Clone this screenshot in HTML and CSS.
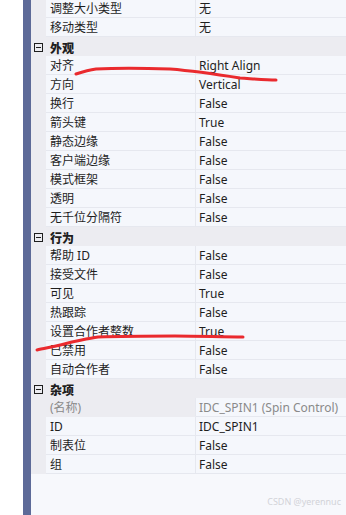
FILE: index.html
```html
<!DOCTYPE html>
<html lang="zh-CN">

<head>
    <meta charset="UTF-8">
    <title>属性</title>
    <link rel="stylesheet" href="styles.css">
</head>

<body>
    <div class="gutter"></div>
    <div class="bar"></div>

    <div class="grid">
        <div class="row first"><span class="strip"></span><span class="name">调整大小类型</span><span class="value">无</span></div>
        <div class="row"><span class="strip"></span><span class="name">移动类型</span><span class="value">无</span></div>

        <div class="cat"><span class="toggle"></span><b>外观</b></div>
        <div class="row"><span class="strip"></span><span class="name">对齐</span><span class="value">Right Align</span></div>
        <div class="row"><span class="strip"></span><span class="name">方向</span><span class="value">Vertical</span></div>
        <div class="row"><span class="strip"></span><span class="name">换行</span><span class="value">False</span></div>
        <div class="row"><span class="strip"></span><span class="name">箭头键</span><span class="value">True</span></div>
        <div class="row"><span class="strip"></span><span class="name">静态边缘</span><span class="value">False</span></div>
        <div class="row"><span class="strip"></span><span class="name">客户端边缘</span><span class="value">False</span></div>
        <div class="row"><span class="strip"></span><span class="name">模式框架</span><span class="value">False</span></div>
        <div class="row"><span class="strip"></span><span class="name">透明</span><span class="value">False</span></div>
        <div class="row"><span class="strip"></span><span class="name">无千位分隔符</span><span class="value">False</span></div>

        <div class="cat"><span class="toggle"></span><b>行为</b></div>
        <div class="row"><span class="strip"></span><span class="name">帮助 ID</span><span class="value">False</span></div>
        <div class="row"><span class="strip"></span><span class="name">接受文件</span><span class="value">False</span></div>
        <div class="row"><span class="strip"></span><span class="name">可见</span><span class="value">True</span></div>
        <div class="row"><span class="strip"></span><span class="name">热跟踪</span><span class="value">False</span></div>
        <div class="row"><span class="strip"></span><span class="name">设置合作者整数</span><span class="value">True</span></div>
        <div class="row"><span class="strip"></span><span class="name">已禁用</span><span class="value">False</span></div>
        <div class="row"><span class="strip"></span><span class="name">自动合作者</span><span class="value">False</span></div>

        <div class="cat"><span class="toggle"></span><b>杂项</b></div>
        <div class="row readonly"><span class="strip"></span><span class="name">(名称)</span><span class="value">IDC_SPIN1 (Spin Control)</span></div>
        <div class="row"><span class="strip"></span><span class="name">ID</span><span class="value">IDC_SPIN1</span></div>
        <div class="row"><span class="strip"></span><span class="name">制表位</span><span class="value">False</span></div>
        <div class="row"><span class="strip"></span><span class="name">组</span><span class="value">False</span></div>
    </div>

    <!-- hand-drawn marks over the grid -->
    <svg class="marks" width="346" height="515" viewBox="0 0 346 515">
        <path d="M76 74 C82 72 88 70 96 69 C115 68 140 68 170 69 C195 71 215 74 240 78 C255 79 266 80 276 80" />
        <path d="M37 350 C45 348 58 346 72 342 C82 340 90 338 98 337 C125 336 150 336 175 336 C200 336 222 337 243 337" />
    </svg>

    <div class="watermark">CSDN @yerennuc</div>
</body>

</html>
```

FILE: styles.css
```css
* {
    margin: 0;
    padding: 0;
    box-sizing: border-box;
}

body {
    font-family: "Noto Sans", "Noto Sans CJK SC", sans-serif;
    font-size: 12px;
    color: #1e1e1e;
    background-color: #fff;
    display: flex;
    height: 515px;
    overflow: hidden;
    position: relative;
}

/* Left edge */
.gutter {
    width: 23px;
    background-color: #fff;
}

.bar {
    width: 8px;
    background-color: #5d6a98;
}

/* Property grid */
.grid {
    flex: 1;
    background-color: #f7f8fc;
    display: flex;
    flex-direction: column;
    margin-top: -1px;
}

.row {
    display: grid;
    grid-template-columns: 15px 150px 1fr;
    height: 19px;
    line-height: 16px;
}

.strip {
    background-color: #ececf1;
}

.name,
.value {
    padding-top: 2px;
    background-color: #f5f7fc;
    border-bottom: 1px solid #e6e8ef;
    white-space: nowrap;
    overflow: hidden;
}

.name {
    padding-left: 4px;
    border-right: 1px solid #e6e8ef;
}

.value {
    padding-left: 3px;
}

.readonly .name {
    background-color: #ececf1;
    border-bottom-color: #ececf1;
    color: #8a8a8a;
}

.readonly .value {
    color: #8a8a8a;
}

/* Category rows */
.cat {
    display: flex;
    align-items: center;
    height: 19px;
    padding-top: 2px;
    background-color: #ececf1;
    font-weight: bold;
}

.cat b {
    margin-left: 4px;
}

.toggle {
    width: 9px;
    height: 9px;
    margin-left: 3px;
    margin-right: 3px;
    border: 1px solid #1e1e1e;
    position: relative;
}

.toggle::after {
    content: "";
    position: absolute;
    left: 1px;
    right: 1px;
    top: 3px;
    height: 1px;
    background-color: #1e1e1e;
}

/* Overlays */
.marks {
    position: absolute;
    left: 0;
    top: 0;
    pointer-events: none;
}

.marks path {
    fill: none;
    stroke: #ea2a2e;
    stroke-width: 3;
    stroke-linecap: round;
}

.watermark {
    position: absolute;
    right: 5px;
    bottom: 7px;
    font-size: 9px;
    color: #d2d3d8;
}
```
